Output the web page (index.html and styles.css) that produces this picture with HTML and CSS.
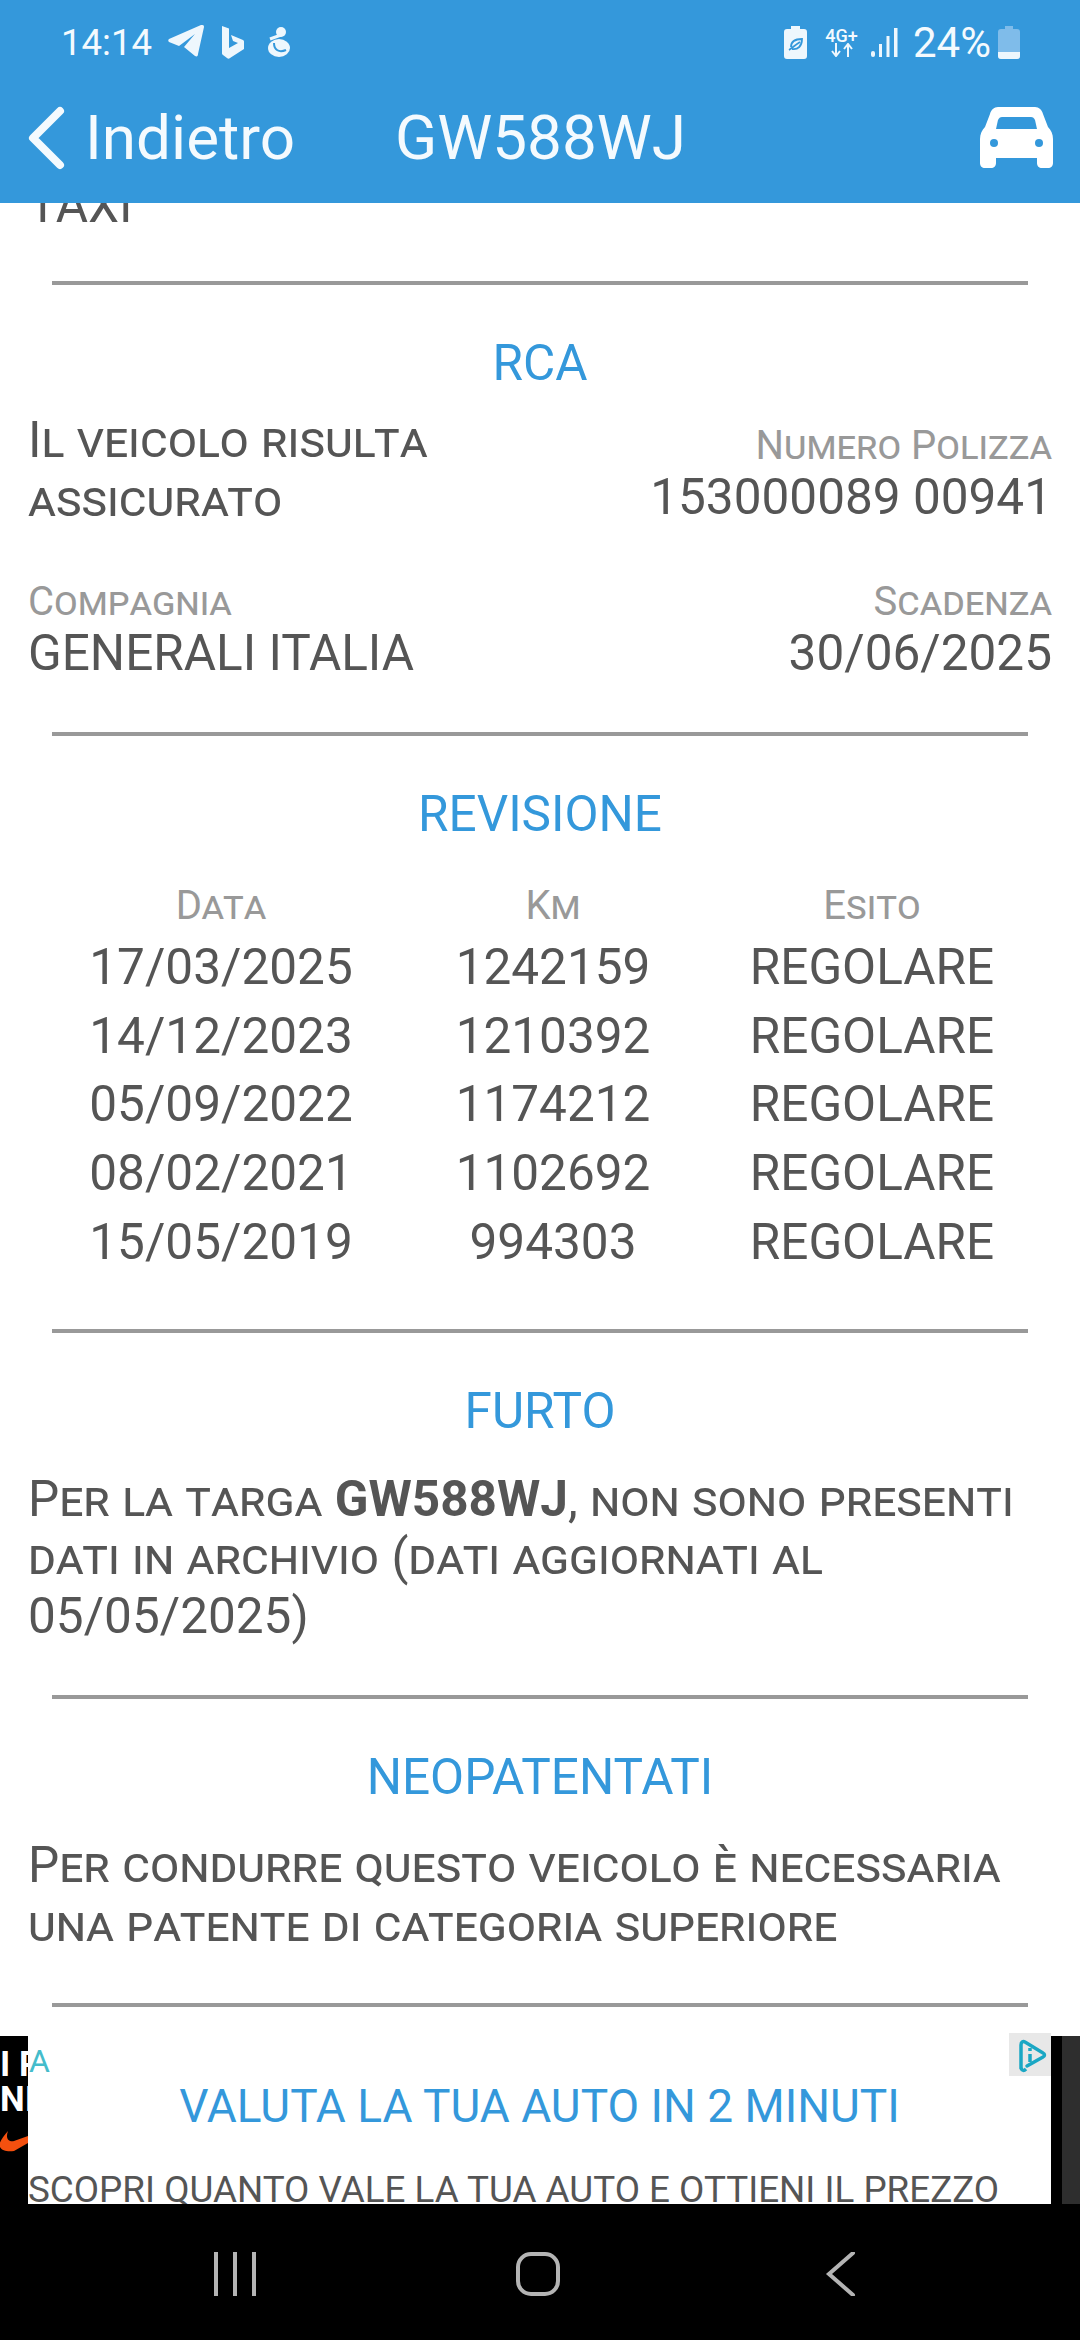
FILE: index.html
```html
<!DOCTYPE html>
<html lang="it">
<head>
    <meta charset="UTF-8">
    <meta name="viewport" content="width=device-width, initial-scale=1.0">
    <title>GW588WJ</title>
    <link rel="stylesheet" href="styles.css">
</head>
<body>
    <div id="app">
        <div id="top">
            <div class="status">
                <div class="status-left">
                    <span class="clock">14:14</span>
                    <svg class="ic-tg" viewBox="0 0 36 34"><path d="M1 14C0 15 0 16 1 17L11 21 27 9 16 22 27 31C29 32 30 31 30 29L36 2C36 0 35 0 33 0Z" fill="#eef7fd"/></svg>
                    <svg class="ic-bing" viewBox="0 0 24 34"><path d="M1 1 8 3.500V23L17 18 12 16 10 10 22 15C23 16 23 16 23 17V24L9 33C8 34 7 34 6 33L2 30C1 29 1 29 1 28Z" fill="#eef7fd"/></svg>
                    <svg class="ic-duck" viewBox="0 0 24 32"><circle cx="14" cy="6" r="5" fill="#eef7fd"/><path d="M3 13 14 9" stroke="#eef7fd" stroke-width="3" fill="none"/><ellipse cx="12" cy="22" rx="11" ry="9" fill="#eef7fd"/><path d="M7 17C7 24 12 27 19 24" stroke="#3498db" stroke-width="2" fill="none"/></svg>
                </div>
                <div class="status-right">
                    <svg class="ic-leaf" viewBox="0 0 23 33"><path d="M7 0h9v3h4c2 0 3 1 3 3v24c0 2-1 3-3 3H3c-2 0-3-1-3-3V6c0-2 1-3 3-3h4z" fill="#eef7fd"/><path d="M5 24c2-1 6-5 11-8M7 21c0-5 4-8 11-8 0 7-4 11-10 10" stroke="#3498db" stroke-width="1.800" fill="none"/></svg>
                    <div class="net">
                        <span class="net-label">4G+</span>
                        <svg viewBox="0 0 26 14"><path d="M7 0v12M3 8l4 5 4-5M19 14V2M15 6l4-5 4 5" stroke="#eef7fd" stroke-width="2" fill="none"/></svg>
                    </div>
                    <svg class="ic-signal" viewBox="0 0 28 31"><rect x="0" y="24" width="4" height="6" rx="2" fill="#eef7fd"/><rect x="8" y="17" width="3" height="13" fill="#eef7fd"/><rect x="15.500" y="9" width="3" height="21" fill="#eef7fd"/><rect x="23" y="1" width="3.500" height="29" fill="#eef7fd"/></svg>
                    <span class="pct">24%</span>
                    <svg class="ic-batt" viewBox="0 0 22 33"><path d="M7 0h8v3h4c2 0 3 1 3 3v24c0 2-1 3-3 3H3c-2 0-3-1-3-3V6c0-2 1-3 3-3h4z" fill="#7fbcea"/><path d="M0 26h22v4c0 2-1 3-3 3H3c-2 0-3-1-3-3z" fill="#eef7fd"/></svg>
                </div>
            </div>
            <div class="bar">
                <div class="back">
                    <svg class="ic-back" viewBox="0 0 38 64"><path d="M33 5 6 32l27 27" stroke="#f4fafe" stroke-width="8" stroke-linecap="round" stroke-linejoin="round" fill="none"/></svg>
                    <span>Indietro</span>
                </div>
                <div class="plate">GW588WJ</div>
                <svg class="ic-car" viewBox="0 0 73 61"><path d="M18 0H55C59 0 62 3 63 7L68 20C71 23 73 27 73 32V56C73 59 71 61 68 61H62C59 61 57 59 57 56V51H16V56C16 59 14 61 11 61H5C2 61 0 59 0 56V32C0 27 2 23 5 20L10 7C11 3 14 0 18 0Z" fill="#fff"/><path d="M22 10H51C53 10 54 11 55 13L57 22H16L18 13C19 11 20 10 22 10Z" fill="#3498db"/><circle cx="14" cy="36" r="4" fill="#3498db"/><circle cx="59" cy="36" r="4" fill="#3498db"/></svg>
            </div>
        </div>

        <div id="content">
            <div class="prev">TAXI</div>
            <hr class="sep sep-first">

            <h2 class="head">RCA</h2>
            <div class="pair">
                <div class="sc big rca-state">Il veicolo risulta assicurato</div>
                <div class="right right-top">
                    <div class="sc lab">Numero Polizza</div>
                    <div class="val">153000089 00941</div>
                </div>
            </div>
            <div class="pair pair2">
                <div>
                    <div class="sc lab">Compagnia</div>
                    <div class="val">GENERALI ITALIA</div>
                </div>
                <div class="right">
                    <div class="sc lab">Scadenza</div>
                    <div class="val">30/06/2025</div>
                </div>
            </div>
            <hr class="sep">

            <h2 class="head">REVISIONE</h2>
            <div class="rev">
                <div class="sc lab">Data</div><div class="sc lab">Km</div><div class="sc lab">Esito</div>
                <div>17/03/2025</div><div>1242159</div><div>REGOLARE</div>
                <div>14/12/2023</div><div>1210392</div><div>REGOLARE</div>
                <div>05/09/2022</div><div>1174212</div><div>REGOLARE</div>
                <div>08/02/2021</div><div>1102692</div><div>REGOLARE</div>
                <div>15/05/2019</div><div>994303</div><div>REGOLARE</div>
            </div>
            <hr class="sep">

            <h2 class="head">FURTO</h2>
            <p class="sc big note">Per la targa <b>GW588WJ</b>, non sono presenti dati in archivio (dati aggiornati al 05/05/2025)</p>
            <hr class="sep">

            <h2 class="head">NEOPATENTATI</h2>
            <p class="sc big note">Per condurre questo veicolo è necessaria una patente di categoria superiore</p>
            <hr class="sep">
        </div>

        <div id="ad">
            <div class="ad-left">
                <div class="ad-left-txt">I P<br>NI</div>
                <svg class="swoosh" viewBox="0 0 28 24"><path d="M8 2C3 8-2 14 0 18 2 22 8 23 14 22L28 14V7L14 12C9 13 5 10 8 2Z" fill="#f4500f"/></svg>
            </div>
            <div class="ad-main">
                <span class="ad-a">A</span>
                <div class="ad-choice">
                    <svg viewBox="0 0 30 34"><path d="M4 29V6C4 3 6 2 8 3L26 14C28 15 28 17 26 18L10 27" stroke="#1aa7c4" stroke-width="3.500" stroke-linecap="round" fill="none"/><path d="M4 29C5 32 7 32 9 30M13 15V23M13 9V12" stroke="#1aa7c4" stroke-width="3.500" fill="none"/></svg>
                </div>
                <div class="ad-title">VALUTA LA TUA AUTO IN 2 MINUTI</div>
                <div class="ad-text">SCOPRI QUANTO VALE LA TUA AUTO E OTTIENI IL PREZZO</div>
            </div>
            <div class="ad-right"></div>
        </div>

        <div id="nav">
            <svg class="nav-ic" viewBox="0 0 44 44"><path d="M3 0v44M22 0v44M41 0v44" stroke="#b4b4b4" stroke-width="4" fill="none"/></svg>
            <svg class="nav-ic" viewBox="0 0 44 44"><rect x="2" y="2" width="40" height="40" rx="13" stroke="#b4b4b4" stroke-width="4" fill="none"/></svg>
            <svg class="nav-ic" viewBox="0 0 44 44"><path d="M34 1 10 22l24 21" stroke="#b4b4b4" stroke-width="4" stroke-linecap="round" fill="none"/></svg>
        </div>
    </div>
</body>
</html>
```

FILE: styles.css
```css
*{margin: 0;padding: 0;box-sizing: border-box;}
body{
    font-family: Roboto, "Liberation Sans", sans-serif;
    background-color: white;
    color: #555;
}
#app{
    height: 2340px;
    display: flex;
    flex-direction: column;
    overflow: hidden;
}

/* top blue part */
#top{
    height: 203px;
    flex: none;
    background-color: #3498db;
    color: #f4fafe;
}
.status{
    height: 72px;
    padding: 24px 60px 0 61px;
    display: flex;
    justify-content: space-between;
    align-items: flex-start;
}
.status-left{
    display: flex;
    align-items: center;
    height: 36px;
}
.clock{font-size: 36.6px;}
.ic-tg{width: 36px;height: 34px;margin-left: 16px;}
.ic-bing{width: 24px;height: 34px;margin-left: 17px;}
.ic-duck{width: 24px;height: 32px;margin-left: 22px;}
.status-right{
    display: flex;
    align-items: center;
    height: 36px;
}
.ic-leaf{width: 23px;height: 33px;}
.net{
    width: 33px;
    margin-left: 18px;
    display: flex;
    flex-direction: column;
    align-items: center;
    line-height: 15px;
}
.net-label{font-size: 18px;font-weight: 500;}
.net svg{width: 26px;height: 14px;}
.ic-signal{width: 28px;height: 31px;margin-left: 13px;}
.pct{font-size: 42px;margin-left: 14px;}
.ic-batt{width: 22px;height: 33px;margin-left: 7px;}

.bar{
    height: 131px;
    padding: 0 27px 0 27px;
    display: flex;
    align-items: center;
    font-size: 62px;
}
.back{
    display: flex;
    align-items: center;
    width: 368px;
}
.ic-back{width: 38px;height: 64px;margin-right: 20px;}
.plate{flex: 1;}
.ic-car{width: 73px;height: 61px;}

/* scrolled content */
#content{
    flex: 1;
    min-height: 0;
    overflow: hidden;
    padding: 0 28px;
}
.prev{
    font-size: 49.5px;
    line-height: 50px;
    margin-top: -23px;
}
.sep{
    border: none;
    height: 4px;
    background-color: #999;
    margin: 0 24px;
}
.sep-first{margin-top: 51px;}
.head{
    font-size: 49.5px;
    font-weight: 400;
    color: #3498db;
    text-align: center;
    line-height: 56px;
    margin-top: 50px;
}
.sc{font-variant: small-caps;}
.big{font-size: 49.5px;line-height: 58.5px;}
.lab{font-size: 40px;line-height: 44px;color: #999;}
.val{font-size: 49.5px;line-height: 58px;}
.pair{
    display: flex;
    justify-content: space-between;
    margin-top: 20px;
}
.pair2{margin-top: 52px;margin-bottom: 50px;}
.rca-state{width: 480px;}
.right{text-align: right;}
.right-top{padding-top: 13px;}
.rev{
    display: grid;
    grid-template-columns: 386px 278px 1fr;
    grid-template-rows: 54px;
    grid-auto-rows: 68.6px;
    align-items: center;
    justify-items: center;
    font-size: 49.5px;
    margin-top: 37px;
    margin-bottom: 53px;
}
.note{margin-top: 31px;margin-bottom: 50px;}

/* ad banner */
#ad{
    height: 168px;
    flex: none;
    display: flex;
}
.ad-left{
    width: 28px;
    flex: none;
    background-color: black;
    overflow: hidden;
    position: relative;
    color: white;
    font-weight: 700;
    font-size: 35px;
    line-height: 35px;
    padding-top: 11px;
    white-space: nowrap;
}
.swoosh{
    position: absolute;
    left: 0;
    top: 93px;
    width: 28px;
    height: 24px;
}
.ad-main{
    flex: 1;
    position: relative;
    background-color: white;
    text-align: center;
}
.ad-a{
    position: absolute;
    left: 1px;
    top: 6px;
    font-size: 32px;
    color: #44bccb;
}
.ad-choice{
    position: absolute;
    right: 0;
    top: -3px;
    width: 42px;
    height: 43px;
    background-color: #e8e8e8;
    padding: 6px 3px 0 8px;
}
.ad-choice svg{display: block;width: 30px;height: 34px;}
.ad-title{
    font-size: 46px;
    line-height: 54px;
    color: #3498db;
    margin-top: 43px;
}
.ad-text{
    font-size: 36.8px;
    line-height: 44px;
    height: 36px;
    overflow: hidden;
    margin-top: 35px;
    white-space: nowrap;
    text-align: left;
}
.ad-right{
    width: 29px;
    flex: none;
    background-color: #2e2e2e;
    border-left: 11px solid black;
}

/* android buttons */
#nav{
    height: 136px;
    flex: none;
    background-color: black;
    display: flex;
    align-items: center;
    padding: 4px 0 0 213px;
    gap: 259px;
}
.nav-ic{width: 44px;height: 44px;}
```
